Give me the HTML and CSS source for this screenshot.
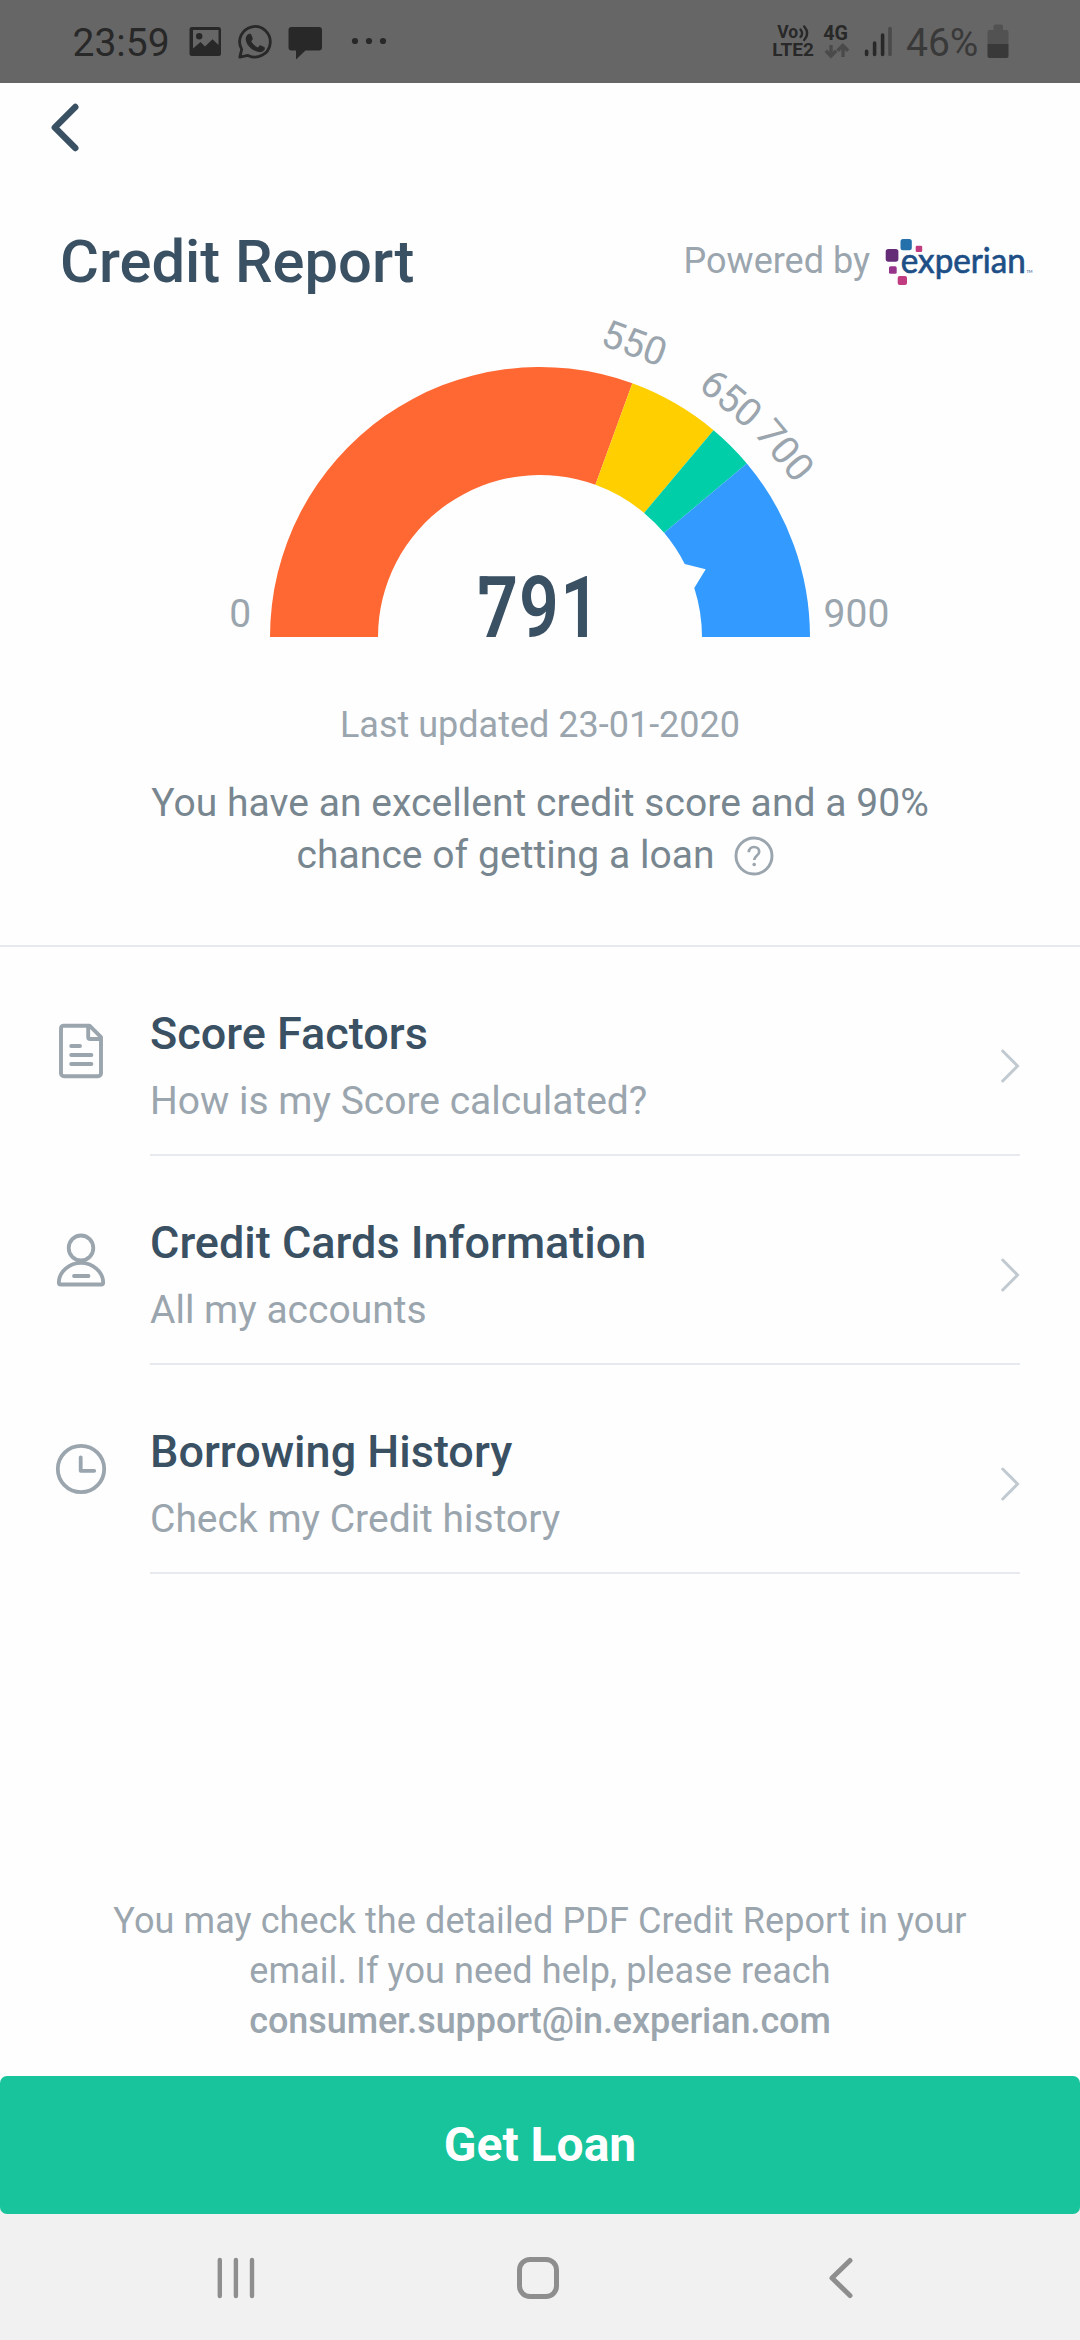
FILE: index.html
```html
<!DOCTYPE html>
<html lang="en">
<head>
<meta charset="utf-8">
<title>Credit Report</title>
<link rel="stylesheet" href="styles.css">
</head>
<body>
<div class="screen">
  <div class="status">
    <span class="clock">23:59</span>
    <svg class="status-left" width="200" height="83" viewBox="187 0 200 83" fill="#282828">
      <path fill-rule="evenodd" d="M192 27h26.500a2.500 2.500 0 0 1 2.500 2.500v24a2.500 2.500 0 0 1-2.500 2.500h-26.500a2.500 2.500 0 0 1-2.500-2.500v-24a2.500 2.500 0 0 1 2.500-2.500zM193 30v18.500l7.500-6.500 4.500 4.500 7.500-7.200 6 5.700v-15z"/>
      <circle cx="199.200" cy="36.300" r="3.200"/>
      <path d="M239.800 57.200l1.900-7.800a15.300 15.300 0 1 1 6.300 6z" fill="none" stroke="#282828" stroke-width="2.800" stroke-linejoin="round"/>
      <path d="M248.300 34.300c1.400-.8 2.600-.5 3.200 1l1.200 3c.3.900-.1 1.500-1.500 3 1.600 2.900 3.900 4.900 6.800 6.100 1.500-1.900 2-2.400 2.900-2l3.300 1.700c.9.500.8 1.500.2 2.700-1 1.900-3.400 2.800-5.800 2.300-7.100-1.700-12.300-7-12.900-12.800-.1-2 .9-4.200 2.600-5z"/>
      <path d="M291.500 27h27.500a3 3 0 0 1 3 3v17.500a3 3 0 0 1-3 3h-13.500l-9.500 9v-9h-4.500a3 3 0 0 1-3-3v-17.500a3 3 0 0 1 3-3z"/>
      <circle cx="355" cy="41" r="3.100"/><circle cx="369" cy="41" r="3.100"/><circle cx="383" cy="41" r="3.100"/>
    </svg>
    <svg class="status-mid" width="130" height="83" viewBox="770 0 130 83">
      <g fill="#282828" class="tiny">
        <text x="777.300" y="38" font-size="17.500">Vo</text>
        <text x="772.300" y="56" font-size="19">LTE2</text>
        <text x="823.300" y="39.700" font-size="19.700">4G</text>
      </g>
      <g fill="none" stroke="#282828" stroke-width="2.400" stroke-linecap="round">
        <path d="M800.500 29.500q3.300 4 0 7.500M804.200 26.500q6 6.800 0 13.500"/>
      </g>
      <g fill="none" stroke="#4a4a4a" stroke-width="3.400">
        <path d="M831 45v11M825.800 50.800l5.200 5.200 5.200-5.200M843 57v-11M837.500 50.800l5.300-5.300 5.300 5.300"/>
      </g>
      <g fill="none" stroke="#282828" stroke-width="3.600" stroke-linecap="round">
        <path d="M866.600 51.300v3.200M874.600 43v11.500M882.600 35v19.500"/><path d="M890 28.500v26" stroke="#4a4a4a"/>
      </g>
    </svg>
    <span class="percent">46%</span>
    <svg class="battery" width="22" height="83" viewBox="986.500 0 22 83">
      <path d="M987 44V32a2 2 0 0 1 2-2h4v-3.500a2 2 0 0 1 2-2h5.500a2 2 0 0 1 2 2V30h3.500a2 2 0 0 1 2 2v12z" fill="#525252"/>
      <path d="M987 44h21v12a2 2 0 0 1-2 2h-17a2 2 0 0 1-2-2z" fill="#393939"/>
    </svg>
  </div>

  <header class="topbar">
    <svg width="34" height="54" viewBox="0 0 34 54"><path d="M28.300 6L7.800 26.500 28.300 47" fill="none" stroke="#3a5063" stroke-width="6.400" stroke-linecap="round" stroke-linejoin="round"/></svg>
  </header>

  <div class="heading">
    <h1>Credit Report</h1>
    <div class="powered">
      <span>Powered by</span>
      <svg class="logo" width="148" height="60" viewBox="885 230 148 60">
        <rect x="900.500" y="238" width="11.300" height="11.300" rx="2.500" fill="#2370aa"/>
        <rect x="915.700" y="244.700" width="6.500" height="6.300" rx="1.300" fill="#c13b80"/>
        <rect x="885.700" y="248" width="12.700" height="12.700" rx="2.700" fill="#642b77"/>
        <rect x="889" y="265.300" width="7.700" height="7.500" rx="1.600" fill="#95348a"/>
        <rect x="897.700" y="275" width="9.300" height="9" rx="2" fill="#c13b80"/>
        <text class="logo-text" x="900.800" y="272" textLength="125" lengthAdjust="spacingAndGlyphs">experian</text>
        <text class="logo-tm" x="1026.500" y="271.500">TM</text>
      </svg>
    </div>
  </div>

  <svg class="gauge" width="1080" height="348" viewBox="0 302 1080 348">
    <path d="M270 637A270 270 0 0 1 632.350 383.280L595.410 484.770A162 162 0 0 0 378 637z" fill="#ff6833"/>
    <path d="M632.350 383.280A270 270 0 0 1 713.550 430.170L644.130 512.900A162 162 0 0 0 595.410 484.770z" fill="#ffcf00"/>
    <path d="M713.550 430.170A270 270 0 0 1 746.830 463.450L664.100 532.870A162 162 0 0 0 644.130 512.900z" fill="#00cea8"/>
    <path d="M746.830 463.450A270 270 0 0 1 810 637H702A162 162 0 0 0 694.300 588L705.700 569.300 684.700 564A162 162 0 0 0 664.100 532.870z" fill="#339bff"/>
    <g class="tick">
      <text x="240.200" y="626.700">0</text>
      <text x="856.500" y="626.700">900</text>
      <text transform="translate(634.600 342.500) rotate(20)" y="14">550</text>
      <text transform="translate(731.400 397.800) rotate(40)" y="14">650</text>
      <text transform="translate(785.300 450) rotate(50)" y="14">700</text>
    </g>
    <text class="score" transform="translate(478.300 636.700) scale(.82 1)" x="0 49.500 100" y="0">791</text>
    <rect x="479.600" y="576.300" width="8" height="18" fill="#3a5063"/>
  </svg>

  <section class="summary">
    <p class="updated">Last updated 23-01-2020</p>
    <p class="message">You have an excellent credit score and a 90%<br>chance of getting a loan <svg class="help" width="40" height="40" viewBox="0 0 40 40"><circle cx="20" cy="20" r="18" fill="none" stroke="#9aa5ae" stroke-width="2.900"/><path d="M14.800 16.200c0-3.300 2.200-5.200 5.200-5.200s5.200 1.800 5.200 4.700c0 4-5 4.200-5 8.300" fill="none" stroke="#9aa5ae" stroke-width="2.700"/><circle cx="20.200" cy="28.500" r="1.800" fill="#9aa5ae"/></svg></p>
  </section>

  <main class="list">
    <div class="row">
      <svg class="icon" width="54" height="58" viewBox="54 1022 54 58" fill="none" stroke="#9aa5ae" stroke-width="3.900" stroke-linejoin="round" stroke-linecap="round">
        <path d="M63.500 1025.700h26l11.500 11.500v36a3 3 0 0 1-3 3h-34a3 3 0 0 1-3-3v-44.500a3 3 0 0 1 2.500-3z"/><path d="M88.200 1026.500v10.500a2 2 0 0 0 2 2H100.500M71.200 1046h8.800M71.200 1055h20.200M71.200 1064h20.200"/>
      </svg>
      <div class="body"><div class="text"><h2>Score Factors</h2><p>How is my Score calculated?</p></div>
        <svg class="chev" width="24" height="40" viewBox="0 0 24 40"><path d="M6.700 5L21.500 20 6.700 35" fill="none" stroke="#c2cad1" stroke-width="3" stroke-linecap="round"/></svg></div>
    </div>
    <div class="row">
      <svg class="icon" width="54" height="58" viewBox="54 1231 54 58" fill="none" stroke="#9aa5ae" stroke-width="3.800" stroke-linejoin="round" stroke-linecap="round">
        <ellipse cx="81" cy="1248" rx="12.300" ry="12.500"/><path d="M74 1276h14.500"/><path d="M81 1262.800c-11.500 0-22 9-22.200 19.700 0 1.200.8 2 2 2h40.400c1.200 0 2-.8 2-2C103 1271.800 92.500 1262.800 81 1262.800z"/>
      </svg>
      <div class="body"><div class="text"><h2>Credit Cards Information</h2><p>All my accounts</p></div>
        <svg class="chev" width="24" height="40" viewBox="0 0 24 40"><path d="M6.700 5L21.500 20 6.700 35" fill="none" stroke="#c2cad1" stroke-width="3" stroke-linecap="round"/></svg></div>
    </div>
    <div class="row">
      <svg class="icon" width="54" height="58" viewBox="54 1440 54 58" fill="none" stroke="#9aa5ae" stroke-width="3.800">
        <circle cx="81" cy="1469" r="23.200"/><path d="M80.700 1457.300v13.500h13.500" stroke-linecap="round" stroke-linejoin="round"/>
      </svg>
      <div class="body"><div class="text"><h2>Borrowing History</h2><p>Check my Credit history</p></div>
        <svg class="chev" width="24" height="40" viewBox="0 0 24 40"><path d="M6.700 5L21.500 20 6.700 35" fill="none" stroke="#c2cad1" stroke-width="3" stroke-linecap="round"/></svg></div>
    </div>
  </main>

  <p class="note">You may check the detailed PDF Credit Report in your<br>email. If you need help, please reach<br><b>consumer.support@in.experian.com</b></p>
  <div class="cta-wrap"><button class="cta">Get Loan</button></div>

  <nav class="nav">
    <svg width="1080" height="126" viewBox="0 2214 1080 126" fill="none" stroke="#8e8e8e" stroke-linecap="round">
      <path d="M219.800 2260v36M235.900 2260v36M252 2260v36" stroke-width="4.400"/>
      <rect x="519.500" y="2259.500" width="37" height="37" rx="10.500" stroke-width="5"/>
      <path d="M850 2260.500L832 2278l18 17.500" stroke-width="5" stroke-linejoin="round"/>
    </svg>
  </nav>
</div>
</body>
</html>
```
FILE: styles.css
```css
* { box-sizing: border-box; }
body { margin: 0; font-family: Roboto, "Liberation Sans", sans-serif; background: #fff; }
h1, h2, p { margin: 0; }
svg { display: block; flex: none; }

.screen { width: 1080px; height: 2340px; display: flex; flex-direction: column; background: #fefefe; overflow: hidden; }

.status { height: 83px; flex: none; display: flex; background: #666; padding: 0 71.5px 0 72.5px; color: #282828; font-size: 39px; line-height: 86.400px; }
.clock { width: 114.500px; }
.status-left { margin-right: auto; }
.status-mid { margin-right: 6px; }
.percent { color: #393939; width: 80.500px; }
.tiny { font-weight: 700; font-family: Roboto, sans-serif; }

.topbar { height: 139px; flex: none; padding: 18px 0 0 47px; }

.heading { height: 80px; flex: none; display: flex; justify-content: space-between; align-items: center; padding: 0 47px 0 60px; }
.heading h1 { font-size: 59.700px; font-weight: 500; line-height: 80px; color: #3a5063; }
.powered { display: flex; align-items: center; gap: 15px; padding-bottom: 3px; font-size: 36px; line-height: 60px; color: #9aa5ae; }
.logo-text { font-family: Lato, sans-serif; font-weight: 400; font-size: 34px; fill: #1d4f86; stroke: #1d4f86; stroke-width: .7px; }
.logo-tm { font-family: Lato, sans-serif; font-size: 4px; fill: #1d4f86; }

.gauge { height: 348px; overflow: visible; }
.tick { font-size: 39px; fill: #9aa5ae; text-anchor: middle; }
.score { font-size: 85px; font-weight: 600; fill: #3a5063; }

.summary { height: 297px; flex: none; text-align: center; border-bottom: 2px solid #e6eaee; padding-top: 50px; }
.updated { font-size: 36px; line-height: 50px; color: #9aa5ae; }
.message { margin-top: 26.700px; font-size: 39px; line-height: 52px; color: #788690; letter-spacing: .05px; }
.help { display: inline-block; vertical-align: -8px; margin: 0 9px 0 10px; }

.row { height: 209px; display: flex; padding-left: 54px; }
.icon { margin-top: 75px; }
.body { flex: 1; display: flex; justify-content: space-between; margin: 0 60px 0 42px; border-bottom: 2px solid #e6eaef; }
.text { padding-top: 57px; }
.text h2 { font-size: 45px; font-weight: 500; line-height: 60px; color: #3a5063; }
.text p { margin-top: 7px; font-size: 39px; line-height: 60px; color: #9aa5ae; }
.chev { margin: 98.500px 0 0; }

.note { margin-top: auto; text-align: center; font-size: 36px; line-height: 50px; color: #9aa5ae; letter-spacing: .09px; }
.note b { font-weight: 500; letter-spacing: -.08px; }
.cta-wrap { flex: none; margin-top: 30px; background: linear-gradient(#fefefe 50%, #f1f1f1 50%); }
.cta { display: block; width: 100%; height: 138px; border: 0; border-radius: 7px; background: #18c49c; color: #fff; font: 700 48px/1 Roboto, sans-serif; padding: 0; }
.nav { height: 126px; flex: none; background: #f1f1f1; }
```
